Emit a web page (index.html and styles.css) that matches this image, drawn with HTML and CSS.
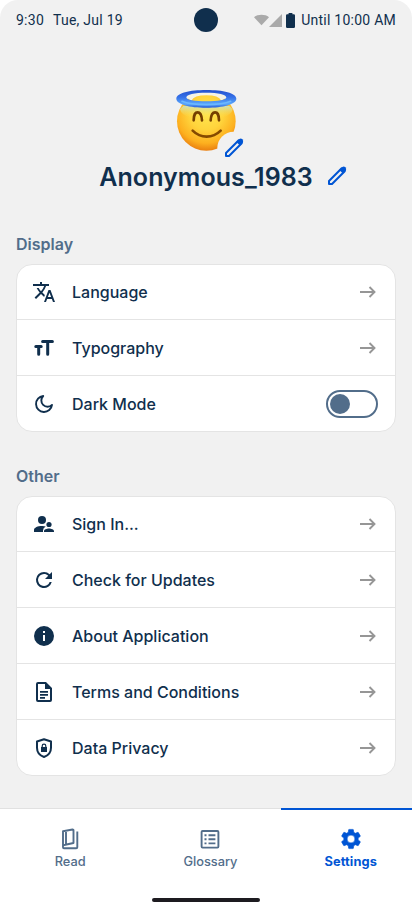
FILE: index.html
```html
<!DOCTYPE html>
<html lang="en">
<head>
    <meta charset="UTF-8">
    <meta name="viewport" content="width=device-width, initial-scale=1.0">
    <title>Settings</title>
    <link rel="stylesheet" href="styles.css">
</head>
<body>
    <div class="screen">
        <header class="status-bar">
            <div class="status-left">
                <span>9:30</span>
                <span>Tue, Jul 19</span>
            </div>
            <div class="camera"></div>
            <div class="status-right">
                <svg class="wifi" width="15" height="12" viewBox="0 0 15 12"><path d="M0 3.2C4 0 11 0 15 3.2L7.5 11.2z"/></svg>
                <svg class="signal" width="13" height="13" viewBox="0 0 13 13"><path d="M13 0v13H0z"/></svg>
                <svg class="battery" width="9" height="15" viewBox="0 0 9 15"><path d="M2.6 0h3.8v1.3h1.4Q9 1.3 9 2.5v11Q9 15 7.8 15H1.2Q0 15 0 13.5v-11Q0 1.3 1.2 1.3h1.4z"/></svg>
                <span>Until 10:00 AM</span>
            </div>
        </header>

        <main class="content">
            <section class="profile">
                <div class="avatar">
                    <svg width="100" height="80" viewBox="0 0 300 240">
                        <defs>
                            <radialGradient id="face" cx=".5" cy=".36" r=".64">
                                <stop offset="0" stop-color="#ffe64f"/>
                                <stop offset=".45" stop-color="#ffd43c"/>
                                <stop offset=".8" stop-color="#fdb01f"/>
                                <stop offset="1" stop-color="#ea8010"/>
                            </radialGradient>
                            <linearGradient id="shine" x1="0" y1="0" x2="0" y2="1">
                                <stop offset="0" stop-color="#cfe0b4"/>
                                <stop offset="1" stop-color="#ffe34f" stop-opacity="0"/>
                            </linearGradient>
                            <linearGradient id="halo" x1="0" y1="0" x2="0" y2="1">
                                <stop offset="0" stop-color="#2450cc"/>
                                <stop offset=".4" stop-color="#3570e8"/>
                                <stop offset=".8" stop-color="#5ba8fb"/>
                                <stop offset="1" stop-color="#2458d8"/>
                            </linearGradient>
                        </defs>
                        <circle cx="139" cy="124" r="88" fill="url(#face)"/>
                        <path d="M70 78h138l10 10q-4 18-30 24H90q-26-6-30-24z" fill="url(#shine)"/>
                        <path d="M78 52a62 20 0 0 1 122 0l-16 10q-8-16-45-16t-45 16z" fill="#f5f3e6"/>
                        <path fill="url(#halo)" fill-rule="evenodd" d="M49 56C49 39 89 30 139 30s90 9 90 26-40 27-90 27-90-10-90-27zM79 52c0 8 24 12 60 12s60-4 60-12-24-14-60-14-60 6-60 14z"/>
                        <path d="M66 64c16 7 42 10 73 10s57-3 73-10" fill="none" stroke="#6bb8ff" stroke-width="5" stroke-linecap="round"/>
                        <path d="M101 121c0-32 23-32 25 0M152 121c2-32 25-32 25 0" fill="none" stroke="#754000" stroke-width="8" stroke-linecap="round"/>
                        <path d="M98 152c24 24 60 24 84 0" fill="none" stroke="#854a00" stroke-width="8" stroke-linecap="round"/>
                        <circle cx="221" cy="204" r="49" fill="#f1f1f1"/>
                    </svg>
                    <svg class="avatar-edit" width="24" height="24" viewBox="0 0 24 24"><path d="M4 20v-3L16.7 4.300l3 3L7 20z" fill="none" stroke="currentColor" stroke-width="2" stroke-linejoin="round"/><path d="M14.300 6l3-3q1.600-1.200 3 .2t.6 3.200l-3 3z" fill="currentColor"/></svg>
                </div>
                <div class="name-row">
                    <h1>Anonymous_1983</h1>
                    <svg class="name-edit" width="24" height="24" viewBox="0 0 24 24"><path d="M4 20v-3L16.7 4.300l3 3L7 20z" fill="none" stroke="currentColor" stroke-width="2" stroke-linejoin="round"/><path d="M14.300 6l3-3q1.600-1.200 3 .2t.6 3.200l-3 3z" fill="currentColor"/></svg>
                </div>
            </section>

            <section class="group">
                <h2>Display</h2>
                <ul class="card">
                    <li class="row">
                        <svg class="icon" viewBox="0 0 24 24"><path d="M12.87 15.07l-2.54-2.51.03-.03A17.52 17.52 0 0 0 14.07 6H17V4h-7V2H8v2H1v2h11.17C11.5 7.92 10.44 9.75 9 11.35 8.07 10.32 7.3 9.19 6.69 8h-2c.73 1.63 1.73 3.17 2.98 4.56l-5.09 5.02L4 19l5-5 3.11 3.11.76-2.04zM18.5 10h-2L12 22h2l1.12-3h4.75L21 22h2l-4.5-12zm-2.62 7l1.62-4.33L19.12 17h-3.24z"/></svg>
                        <span>Language</span>
                        <svg class="arrow" viewBox="0 0 24 24"><path d="M4 12h14.500M13.5 7l5 5-5 5"/></svg>
                    </li>
                    <li class="row">
                        <svg class="icon type" viewBox="0 0 24 24"><path d="M10.600 5.500h9.800M15.700 5.500v12.700M3.800 10.500h5.400M6.700 10.500v7.700"/></svg>
                        <span>Typography</span>
                        <svg class="arrow" viewBox="0 0 24 24"><path d="M4 12h14.500M13.5 7l5 5-5 5"/></svg>
                    </li>
                    <li class="row">
                        <svg class="icon line" viewBox="0 0 24 24"><path d="M11.200 4A8 8 0 1 0 20 12.900 5.500 5.500 0 0 1 11.200 4z"/></svg>
                        <span>Dark Mode</span>
                        <div class="toggle"></div>
                    </li>
                </ul>
            </section>

            <section class="group">
                <h2>Other</h2>
                <ul class="card">
                    <li class="row">
                        <svg class="icon" viewBox="0 0 24 24"><circle cx="10" cy="8" r="4"/><circle cx="17" cy="12.5" r="2.6"/><path d="M10.4 14.1C6 14 2 15.6 2 18v2h9v-1.4q0-2.7 2.7-4-1.4-.5-3.3-.5zM17 16.5c-2.2 0-5 1-5 2.7V20h10v-.8c0-1.7-2.8-2.7-5-2.7z"/></svg>
                        <span>Sign In...</span>
                        <svg class="arrow" viewBox="0 0 24 24"><path d="M4 12h14.500M13.5 7l5 5-5 5"/></svg>
                    </li>
                    <li class="row">
                        <svg class="icon" viewBox="0 0 24 24"><path d="M17.65 6.35A7.96 7.96 0 0 0 12 4a8 8 0 1 0 7.73 10h-2.08A6 6 0 1 1 12 6c1.66 0 3.14.69 4.22 1.78L13 11h7V4l-2.35 2.35z"/></svg>
                        <span>Check for Updates</span>
                        <svg class="arrow" viewBox="0 0 24 24"><path d="M4 12h14.500M13.5 7l5 5-5 5"/></svg>
                    </li>
                    <li class="row">
                        <svg class="icon" viewBox="0 0 24 24"><path d="M12 2a10 10 0 1 0 0 20 10 10 0 0 0 0-20zm1 15h-2v-6h2v6zm0-8h-2V7h2v2z"/></svg>
                        <span>About Application</span>
                        <svg class="arrow" viewBox="0 0 24 24"><path d="M4 12h14.500M13.5 7l5 5-5 5"/></svg>
                    </li>
                    <li class="row">
                        <svg class="icon" viewBox="0 0 24 24"><path d="M14 2H6a2 2 0 0 0-2 2v16a2 2 0 0 0 2 2h12a2 2 0 0 0 2-2V8l-6-6zm4 18H6V4h7v5h5v11zM8 11h8v1.8H8zm0 3h8v1.8H8zm0 3h5v1.8H8z"/></svg>
                        <span>Terms and Conditions</span>
                        <svg class="arrow" viewBox="0 0 24 24"><path d="M4 12h14.500M13.5 7l5 5-5 5"/></svg>
                    </li>
                    <li class="row">
                        <svg class="icon" viewBox="0 0 24 24"><path d="M12 3.2l7 2.3v6.2c0 4.6-3 7.8-7 9.3-4-1.5-7-4.7-7-9.3V5.5z" fill="none" stroke="currentColor" stroke-width="2" stroke-linejoin="round"/><path d="M9 11h6v5H9z"/><path d="M10.2 11V9.9a1.8 1.8 0 0 1 3.6 0V11" fill="none" stroke="currentColor" stroke-width="1.2"/></svg>
                        <span>Data Privacy</span>
                        <svg class="arrow" viewBox="0 0 24 24"><path d="M4 12h14.500M13.5 7l5 5-5 5"/></svg>
                    </li>
                </ul>
            </section>
        </main>

        <nav class="tabs">
            <a class="tab">
                <svg class="icon line" viewBox="0 0 24 24"><path d="M5 4.2L14.5 2.5Q15.500 2.4 15.500 3.4V16L5 18.300zM8 4v13.5M5 4.2V20.2Q5 21.2 6 21.2H18.2Q19.300 21.2 19.300 20.2V4.5"/></svg>
                <span>Read</span>
            </a>
            <a class="tab">
                <svg class="icon line" viewBox="0 0 24 24"><rect x="3.600" y="4" width="16.800" height="16.600" rx="1"/><path d="M6.500 8.200h2M6.500 12.300h2M6.500 16.400h2M10.500 8.200h6.900M10.500 12.300h6.900M10.500 16.400h6.900"/></svg>
                <span>Glossary</span>
            </a>
            <a class="tab active">
                <svg class="icon gear" viewBox="0 0 24 24"><path d="M19.14 12.94c.04-.3.06-.61.06-.94s-.02-.64-.07-.94l2.03-1.58a.49.49 0 0 0 .12-.61l-1.92-3.32a.49.49 0 0 0-.59-.22l-2.39.96a7.03 7.03 0 0 0-1.62-.94l-.36-2.54a.48.48 0 0 0-.48-.41h-3.84a.48.48 0 0 0-.47.41l-.36 2.54c-.59.24-1.13.57-1.62.94l-2.39-.96a.48.48 0 0 0-.59.22L2.74 8.87a.47.47 0 0 0 .12.61l2.03 1.58c-.05.3-.09.63-.09.94s.02.64.07.94l-2.03 1.58a.49.49 0 0 0-.12.61l1.92 3.32c.12.22.37.29.59.22l2.39-.96c.5.38 1.03.7 1.62.94l.36 2.54c.05.24.24.41.48.41h3.84c.24 0 .44-.17.47-.41l.36-2.54c.59-.24 1.13-.56 1.62-.94l2.39.96c.22.08.47 0 .59-.22l1.92-3.32a.47.47 0 0 0-.12-.61l-2.01-1.58zM12 15.9a3.9 3.9 0 1 1 0-7.800 3.9 3.9 0 0 1 0 7.800z"/></svg>
                <span>Settings</span>
            </a>
        </nav>
        <div class="home-bar"></div>
    </div>
</body>
</html>
```

FILE: styles.css
```css
* {
    box-sizing: border-box;
}
body {
    margin: 0;
    background: #fff;
    color: #102f4d;
    font-family: Inter, sans-serif;
}
h1, h2, ul {
    margin: 0;
    padding: 0;
}
.screen {
    display: flex;
    flex-direction: column;
    width: 412px;
    height: 912px;
    overflow: hidden;
    background: #f1f1f1;
    border-radius: 18px 18px 0 0;
}
.status-bar {
    display: grid;
    grid-template-columns: 1fr 24px 1fr;
    align-items: center;
    height: 40px;
    padding: 0 16px;
    font: 14px/20px Roboto, sans-serif;
    letter-spacing: 0.25px;
}
.status-left {
    display: flex;
    gap: 9px;
}
.camera {
    width: 24px;
    height: 24px;
    border-radius: 50%;
    background: #102f4d;
}
.status-right {
    display: flex;
    align-items: center;
    justify-content: flex-end;
    white-space: nowrap;
}
.wifi, .signal {
    fill: #aaa;
}
.battery {
    margin: 0 6px 0 4px;
    fill: #102f4d;
}
.content {
    flex: none;
    height: 768px;
    padding: 40px 16px 0;
}
.avatar {
    position: relative;
    width: 100px;
    height: 80px;
    margin: 0 auto;
    left: 4px;
}
.avatar svg {
    display: block;
}
.avatar .avatar-edit {
    position: absolute;
    left: 62px;
    top: 56px;
}
.avatar-edit, .name-edit {
    color: #0055d4;
}
.name-row {
    display: flex;
    align-items: center;
    justify-content: center;
    gap: 12px;
    height: 32px;
    padding-left: 36px;
}
.name-row h1 {
    padding-top: 1px;
    font-size: 25px;
    font-weight: 600;
    line-height: 32px;
    letter-spacing: 0.07px;
}
.group h2 {
    height: 32px;
    color: #526d8a;
    font-size: 16px;
    font-weight: 600;
    line-height: 24px;
}
.profile + .group {
    margin-top: 40px;
}
.group + .group {
    margin-top: 32px;
}
.card {
    list-style: none;
    background: #fff;
    border: 1px solid #e4e4e4;
    border-radius: 16px;
}
.row {
    display: flex;
    align-items: center;
    gap: 16px;
    height: 56px;
    padding: 0 15px;
    border-bottom: 1px solid #e4e4e4;
    font-size: 16px;
    font-weight: 500;
}
.row:first-child {
    height: 55px;
}
.row:last-child {
    height: 55px;
    border-bottom: 0;
}
.row span {
    flex: 1;
}
.icon {
    width: 24px;
    height: 24px;
    fill: currentColor;
}
.icon.line, .icon.type {
    fill: none;
    stroke: currentColor;
    stroke-width: 1.9;
    stroke-linejoin: round;
}
.icon.type {
    stroke-width: 3;
    stroke-linecap: round;
}
.icon.gear {
    stroke: currentColor;
    stroke-width: 0.6;
}
.arrow {
    width: 24px;
    height: 24px;
    fill: none;
    stroke: #969696;
    stroke-width: 1.9;
}
.toggle {
    width: 52px;
    height: 28px;
    margin-right: 2px;
    padding: 2px;
    border: 2px solid #526d8a;
    border-radius: 14px;
}
.toggle::before {
    content: "";
    display: block;
    width: 20px;
    height: 20px;
    border-radius: 50%;
    background: #526d8a;
}
.tabs {
    display: grid;
    grid-template-columns: repeat(3, 140.3px);
    flex: none;
    height: 80px;
    background: #fff;
}
.tab {
    display: flex;
    flex-direction: column;
    align-items: center;
    padding-top: 18px;
    border-top: 1px solid #e1e1e1;
    color: #526d8a;
    font-size: 12.8px;
    font-weight: 500;
    line-height: 22px;
}
.tab.active {
    padding-top: 17px;
    border-top: 2px solid #0055d4;
    color: #0055d4;
    font-weight: 700;
    letter-spacing: 0.1px;
}
.home-bar {
    flex: 1;
    background: #fff;
}
.home-bar::before {
    content: "";
    display: block;
    width: 108px;
    height: 4px;
    margin: 10px auto 0;
    border-radius: 2px;
    background: #1d1b20;
}
```
